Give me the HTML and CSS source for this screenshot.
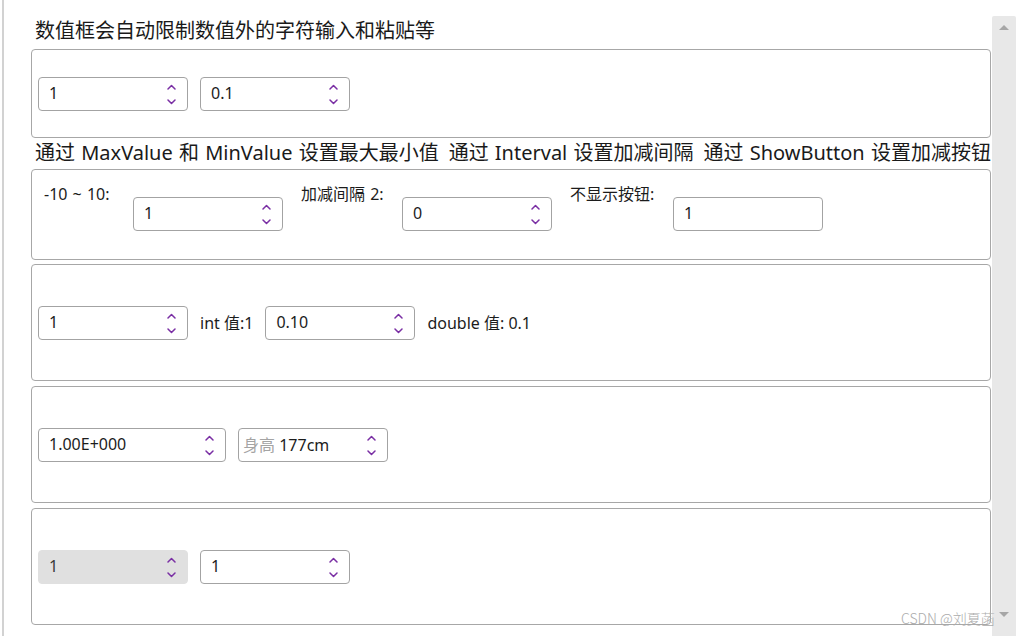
FILE: index.html
```html
<!DOCTYPE html>
<html lang="zh-CN">
<head>
<meta charset="utf-8">
<title>NumericUpDown</title>
<link rel="stylesheet" href="styles.css">
</head>
<body>
<div class="frame">
  <div class="edge"></div>
  <main class="content">
    <div class="title title-first">数值框会自动限制数值外的字符输入和粘贴等</div>
    <section class="box box-short">
      <div class="num"><span class="val">1</span><svg class="spin" width="9" height="22" viewBox="0 0 9 22"><path d="M1 6 L4.5 2.5 L8 6"/><path d="M1 17 L4.5 20.5 L8 17"/></svg></div>
      <div class="num"><span class="val">0.1</span><svg class="spin" width="9" height="22" viewBox="0 0 9 22"><path d="M1 6 L4.5 2.5 L8 6"/><path d="M1 17 L4.5 20.5 L8 17"/></svg></div>
    </section>

    <div class="title title-row">
      <span>通过 MaxValue 和 MinValue 设置最大最小值</span>
      <span>通过 Interval 设置加减间隔</span>
      <span>通过 ShowButton 设置加减按钮</span>
    </div>
    <section class="box box-short box-top">
      <div class="group">
        <span class="lbl lbl-1">-10 ~ 10:</span>
        <div class="num num-low"><span class="val">1</span><svg class="spin" width="9" height="22" viewBox="0 0 9 22"><path d="M1 6 L4.5 2.5 L8 6"/><path d="M1 17 L4.5 20.5 L8 17"/></svg></div>
      </div>
      <div class="group">
        <span class="lbl lbl-2">加减间隔 2:</span>
        <div class="num num-low"><span class="val">0</span><svg class="spin" width="9" height="22" viewBox="0 0 9 22"><path d="M1 6 L4.5 2.5 L8 6"/><path d="M1 17 L4.5 20.5 L8 17"/></svg></div>
      </div>
      <div class="group">
        <span class="lbl lbl-3">不显示按钮:</span>
        <div class="num num-low"><span class="val">1</span></div>
      </div>
    </section>

    <section class="box box-tall">
      <div class="num"><span class="val">1</span><svg class="spin" width="9" height="22" viewBox="0 0 9 22"><path d="M1 6 L4.5 2.5 L8 6"/><path d="M1 17 L4.5 20.5 L8 17"/></svg></div>
      <span class="txt">int 值:1</span>
      <div class="num"><span class="val">0.10</span><svg class="spin" width="9" height="22" viewBox="0 0 9 22"><path d="M1 6 L4.5 2.5 L8 6"/><path d="M1 17 L4.5 20.5 L8 17"/></svg></div>
      <span class="txt">double 值: 0.1</span>
    </section>

    <section class="box box-tall">
      <div class="num num-wide"><span class="val">1.00E+000</span><svg class="spin" width="9" height="22" viewBox="0 0 9 22"><path d="M1 6 L4.5 2.5 L8 6"/><path d="M1 17 L4.5 20.5 L8 17"/></svg></div>
      <div class="num num-prefixed"><span class="val"><span class="prefix">身高</span> 177cm</span><svg class="spin" width="9" height="22" viewBox="0 0 9 22"><path d="M1 6 L4.5 2.5 L8 6"/><path d="M1 17 L4.5 20.5 L8 17"/></svg></div>
    </section>

    <section class="box box-tall">
      <div class="num num-disabled"><span class="val">1</span><svg class="spin" width="9" height="22" viewBox="0 0 9 22"><path d="M1 6 L4.5 2.5 L8 6"/><path d="M1 17 L4.5 20.5 L8 17"/></svg></div>
      <div class="num"><span class="val">1</span><svg class="spin" width="9" height="22" viewBox="0 0 9 22"><path d="M1 6 L4.5 2.5 L8 6"/><path d="M1 17 L4.5 20.5 L8 17"/></svg></div>
    </section>
  </main>
  <div class="scrollbar">
    <span class="arrow-up"></span>
    <span class="arrow-down"></span>
  </div>
  <div class="watermark">CSDN @刘夏菡</div>
</div>
</body>
</html>
```

FILE: styles.css
```css
html, body {
  margin: 0;
  padding: 0;
  background: #ffffff;
}

body {
  width: 1016px;
  height: 636px;
  overflow: hidden;
  font-family: "Noto Sans", "Noto Sans CJK SC", sans-serif;
  color: #1c1c1c;
}

.frame {
  position: relative;
  width: 1016px;
  height: 636px;
  display: flex;
}

.edge {
  width: 2px;
  margin-left: 2px;
  background: #d2d2d2;
  flex: none;
}

.content {
  margin-left: 27px;
  width: 960px;
  flex: none;
  padding-top: 18px;
}

.title {
  font-size: 20px;
  line-height: 26px;
  padding-left: 4px;
  white-space: nowrap;
  color: #1a1a1a;
}

.title-first {
  margin-bottom: 5px;
}

.title-row {
  display: flex;
  gap: 10px;
  overflow: hidden;
  margin-top: 2px;
  margin-bottom: 3px;
  word-spacing: 1px;
}

.title-row span {
  flex: none;
}

.box {
  box-sizing: border-box;
  border: 1px solid #a7a7a7;
  border-radius: 4px;
  padding: 0 6px;
  display: flex;
  align-items: center;
  gap: 12px;
}

.box-short {
  height: 89px;
}

.box-top {
  height: 91px;
  align-items: flex-start;
  padding: 14px 0 0 12px;
  gap: 18px;
}

.box-tall {
  height: 117px;
  margin-top: 4px;
}

.box-tall + .box-tall {
  margin-top: 5px;
}

.group {
  display: flex;
  align-items: flex-start;
}

.lbl {
  font-size: 16px;
  line-height: 20px;
  word-spacing: 1px;
  flex: none;
  white-space: nowrap;
}

.lbl-1 { width: 89px; }
.lbl-2 { width: 101px; }
.lbl-3 { width: 103px; }

.num {
  box-sizing: border-box;
  width: 150px;
  height: 34px;
  border: 1px solid #a3a3a3;
  border-radius: 4px;
  display: flex;
  align-items: center;
  padding-left: 10px;
  padding-right: 11px;
  font-size: 16px;
  flex: none;
  background: #ffffff;
}

.val {
  flex: 1;
  white-space: nowrap;
  padding-bottom: 2px;
}

.num-low {
  margin-top: 13px;
}

.num-wide {
  width: 188px;
}

.num-prefixed {
  padding-left: 4px;
}

.num-disabled {
  background: #e0e0e0;
  border-color: #e0e0e0;
  color: #3a3a3a;
}

.prefix {
  color: #a4a4a4;
}

.spin {
  flex: none;
  display: block;
}

.spin path {
  fill: none;
  stroke: #7a2fa4;
  stroke-width: 1.5;
  stroke-linecap: round;
  stroke-linejoin: round;
}

.txt {
  font-size: 16px;
  white-space: nowrap;
  padding-bottom: 2px;
}

.scrollbar {
  position: absolute;
  right: 0;
  top: 16px;
  bottom: 0;
  width: 24px;
  background: #e8e8e8;
  border-radius: 2px 2px 0 0;
}

.arrow-up {
  position: absolute;
  left: 7px;
  top: 9px;
  width: 0;
  height: 0;
  border-left: 5px solid transparent;
  border-right: 5px solid transparent;
  border-bottom: 5px solid #a6a6a6;
}

.arrow-down {
  position: absolute;
  left: 7px;
  bottom: 19px;
  width: 0;
  height: 0;
  border-left: 5px solid transparent;
  border-right: 5px solid transparent;
  border-top: 5px solid #a6a6a6;
}

.watermark {
  position: absolute;
  left: 901px;
  top: 609px;
  font-family: "Noto Sans CJK SC", sans-serif;
  font-size: 14px;
  line-height: 18px;
  font-weight: 300;
  color: #acacac;
  white-space: nowrap;
}
```
